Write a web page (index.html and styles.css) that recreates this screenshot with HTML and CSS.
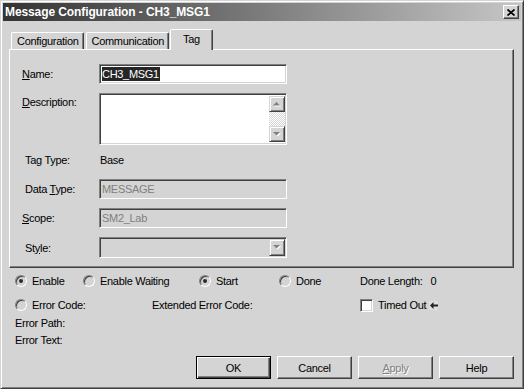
FILE: index.html
```html
<!DOCTYPE html>
<html lang="en">
<head>
    <meta charset="UTF-8">
    <title>Message Configuration - CH3_MSG1</title>
    <link rel="stylesheet" href="styles.css">
</head>
<body>
<div id="dialog">
    <div id="title-bar">
        <span class="title-text">Message Configuration - CH3_MSG1</span>
        <div class="close-btn">
            <svg width="8" height="7" viewBox="0 0 8 7"><path d="M0.5 0.5L7.5 6.5M7.5 0.5L0.5 6.5" stroke="#000" stroke-width="1.7"/></svg>
        </div>
    </div>
    <div id="tab-row">
        <div class="tab">Configuration</div>
        <div class="tab">Communication</div>
        <div class="tab active">Tag</div>
    </div>
    <div id="tab-panel">
        <div class="field-row">
            <label class="field-label"><u>N</u>ame:</label>
            <div class="edit"><span class="selected-text">CH3_MSG1</span></div>
        </div>
        <div class="field-row desc-row">
            <label class="field-label desc-label"><u>D</u>escription:</label>
            <div class="edit desc-edit">
                <div class="desc-text"></div>
                <div class="scrollbar">
                    <div class="scroll-btn">
                        <svg width="8" height="5" viewBox="0 0 8 5"><path d="M4.5 1L8 4.5H1z" fill="#fff"/><path d="M3.5 0L7 3.5H0z" fill="#808080"/></svg>
                    </div>
                    <div class="scroll-track"></div>
                    <div class="scroll-btn">
                        <svg width="8" height="5" viewBox="0 0 8 5"><path d="M1 1H8L4.5 4.5z" fill="#fff"/><path d="M0 0H7L3.5 3.5z" fill="#808080"/></svg>
                    </div>
                </div>
            </div>
        </div>
        <div class="field-row info-row">
            <label class="field-label inset">Tag Type:</label>
            <span class="info-value">Base</span>
        </div>
        <div class="field-row">
            <label class="field-label inset">Data <u>T</u>ype:</label>
            <div class="edit disabled">MESSAGE</div>
        </div>
        <div class="field-row">
            <label class="field-label"><u>S</u>cope:</label>
            <div class="edit disabled">SM2_Lab</div>
        </div>
        <div class="field-row">
            <label class="field-label inset">St<u>y</u>le:</label>
            <div class="edit disabled combo">
                <div class="scroll-btn">
                    <svg width="8" height="5" viewBox="0 0 8 5"><path d="M1 1H8L4.5 4.5z" fill="#fff"/><path d="M0 0H7L3.5 3.5z" fill="#808080"/></svg>
                </div>
            </div>
        </div>
    </div>
    <div id="status">
        <div class="status-row">
            <div class="option enable-opt"><span class="radio checked"></span>Enable</div>
            <div class="option waiting-opt"><span class="radio"></span>Enable Waiting</div>
            <div class="option start-opt"><span class="radio checked"></span>Start</div>
            <div class="option done-opt"><span class="radio"></span>Done</div>
            <div class="option">Done Length:<span class="done-length">0</span></div>
        </div>
        <div class="status-row second-row">
            <div class="option error-opt"><span class="radio"></span>Error Code:</div>
            <div class="option extended-opt">Extended Error Code:</div>
            <div class="option"><span class="checkbox"></span>Timed Out
                <span class="timeout-arrow">
                    <svg width="8" height="7" viewBox="0 0 8 7"><path d="M0 3.5L3.5 0V2.5H8V4.5H3.5V7z" fill="#222"/></svg>
                </span>
            </div>
        </div>
        <div class="status-line error-path">Error Path:</div>
        <div class="status-line">Error Text:</div>
    </div>
    <div id="button-row">
        <div class="btn default">OK</div>
        <div class="btn">Cancel</div>
        <div class="btn disabled"><u>A</u>pply</div>
        <div class="btn">Help</div>
    </div>
</div>
</body>
</html>
```

FILE: styles.css
```css
body {
    margin: 0;
    padding: 0;
    background: #d4d4d4;
    color: #000;
    font-family: "Liberation Sans", Arial, sans-serif;
    font-size: 11px;
    letter-spacing: -0.3px;
}
#dialog {
    width: 524px;
    height: 389px;
    box-sizing: border-box;
    padding: 2px;
    border: 1px solid;
    border-color: #d4d4d4 #404040 #404040 #d4d4d4;
    box-shadow: inset 1px 1px #fff, inset -1px -1px #808080;
}
#title-bar {
    height: 18px;
    display: flex;
    align-items: center;
    justify-content: space-between;
    padding: 0 2px;
    background: linear-gradient(to right, #333333, #c6c6c6);
}
.title-text {
    color: #fff;
    font-weight: bold;
    font-size: 12px;
    letter-spacing: -0.1px;
}
.close-btn {
    width: 16px;
    height: 14px;
    box-sizing: border-box;
    display: flex;
    align-items: center;
    justify-content: center;
    background: #d4d4d4;
    border: 1px solid;
    border-color: #fff #404040 #404040 #fff;
    box-shadow: inset -1px -1px #808080;
}
#tab-row {
    display: flex;
    align-items: flex-end;
    margin-top: 8px;
    padding-left: 8px;
    height: 20px;
}
.tab {
    height: 17px;
    box-sizing: border-box;
    display: flex;
    align-items: center;
    padding: 0 4px 0 5px;
    margin-right: 2px;
    border: 1px solid;
    border-bottom: none;
    border-color: #fff #404040 transparent #fff;
    box-shadow: inset -1px 0 #808080;
    border-radius: 2px 2px 0 0;
}
.tab.active {
    height: 21px;
    margin-left: -1px;
    margin-bottom: -1px;
    padding: 0 12px 3px;
    position: relative;
    z-index: 1;
    background: #d4d4d4;
}
#tab-panel {
    margin: 0 7px 0 6px;
    padding: 14px 0 9px 12px;
    border: 1px solid;
    border-color: #fff #404040 #404040 #fff;
    box-shadow: inset -1px -1px #808080;
}
.field-row {
    display: flex;
    align-items: center;
    margin-top: 9px;
}
.field-row:first-child {
    margin-top: 0;
}
.desc-row {
    align-items: flex-start;
}
.info-row {
    height: 20px;
    margin-top: 5px;
}
.field-label {
    width: 77px;
    flex: none;
}
.field-label.inset {
    width: 74px;
    padding-left: 3px;
}
.desc-label {
    padding-top: 3px;
}
.info-value {
    padding-left: 1px;
}
.edit {
    width: 188px;
    height: 20px;
    box-sizing: border-box;
    display: flex;
    align-items: center;
    padding: 0 2px;
    background: #fff;
    border: 1px solid;
    border-color: #808080 #fff #fff #808080;
    box-shadow: inset 1px 1px #404040, inset -1px -1px #d4d4d4;
}
.edit.disabled {
    background: #d4d4d4;
    color: #808080;
}
.selected-text {
    background: #262626;
    color: #fff;
    line-height: 14px;
    padding: 0 1px 0 0;
}
.desc-edit {
    height: 52px;
    padding: 1px;
    align-items: stretch;
}
.desc-text {
    flex: 1;
}
.scrollbar {
    width: 16px;
    display: flex;
    flex-direction: column;
    margin: 1px 0;
}
.scroll-track {
    flex: 1;
    background-image: conic-gradient(#fff 25%, #d4d4d4 0 50%, #fff 0 75%, #d4d4d4 0);
    background-size: 2px 2px;
}
.scroll-btn {
    width: 16px;
    height: 16px;
    box-sizing: border-box;
    display: flex;
    align-items: center;
    justify-content: center;
    background: #d4d4d4;
    border: 1px solid;
    border-color: #d4d4d4 #404040 #404040 #d4d4d4;
    box-shadow: inset 1px 1px #fff, inset -1px -1px #808080;
}
.combo {
    height: 21px;
    justify-content: flex-end;
    padding: 0 1px;
}
.combo .scroll-btn {
    height: 17px;
}
#status {
    padding: 5px 0 0 12px;
}
.status-row {
    display: flex;
    align-items: center;
    height: 16px;
}
.second-row {
    margin-top: 8px;
}
.option {
    display: flex;
    align-items: center;
    flex: none;
}
.enable-opt { width: 68px; }
.waiting-opt { width: 116px; }
.start-opt { width: 80px; }
.done-opt { width: 81px; }
.error-opt { width: 137px; }
.extended-opt { width: 208px; }
.done-length {
    margin-left: 8px;
}
.radio {
    width: 12px;
    height: 12px;
    box-sizing: border-box;
    flex: none;
    display: flex;
    align-items: center;
    justify-content: center;
    margin-right: 5px;
    border-radius: 50%;
    background: #d4d4d4;
    border: 1px solid;
    border-color: #808080 #fff #fff #808080;
    box-shadow: inset 1px 1px #404040, inset -1px -1px #d4d4d4;
}
.radio.checked::after {
    content: "";
    width: 4px;
    height: 4px;
    border-radius: 50%;
    background: #2a2a2a;
}
.checkbox {
    width: 13px;
    height: 13px;
    box-sizing: border-box;
    flex: none;
    margin-right: 5px;
    background: #fff;
    border: 1px solid;
    border-color: #808080 #fff #fff #808080;
    box-shadow: inset 1px 1px #404040, inset -1px -1px #d4d4d4;
}
.timeout-arrow {
    display: flex;
    align-items: center;
    justify-content: center;
    width: 9px;
    height: 9px;
    margin-left: 3px;
    background: #dedede;
}
.status-line {
    height: 16px;
    line-height: 16px;
    margin-top: 1px;
}
.error-path {
    margin-top: 2px;
}
#button-row {
    display: flex;
    justify-content: flex-end;
    gap: 6px;
    padding-right: 7px;
    margin-top: 8px;
}
.btn {
    width: 75px;
    height: 23px;
    box-sizing: border-box;
    display: flex;
    align-items: center;
    justify-content: center;
    background: #d4d4d4;
    border: 1px solid;
    border-color: #fff #404040 #404040 #fff;
    box-shadow: inset -1px -1px #808080;
}
.btn.default {
    border-color: #000;
    box-shadow: inset 1px 1px #fff, inset -1px -1px #404040, inset -2px -2px #808080;
}
.btn.disabled {
    color: #808080;
    text-shadow: 1px 1px #fff;
}
```
